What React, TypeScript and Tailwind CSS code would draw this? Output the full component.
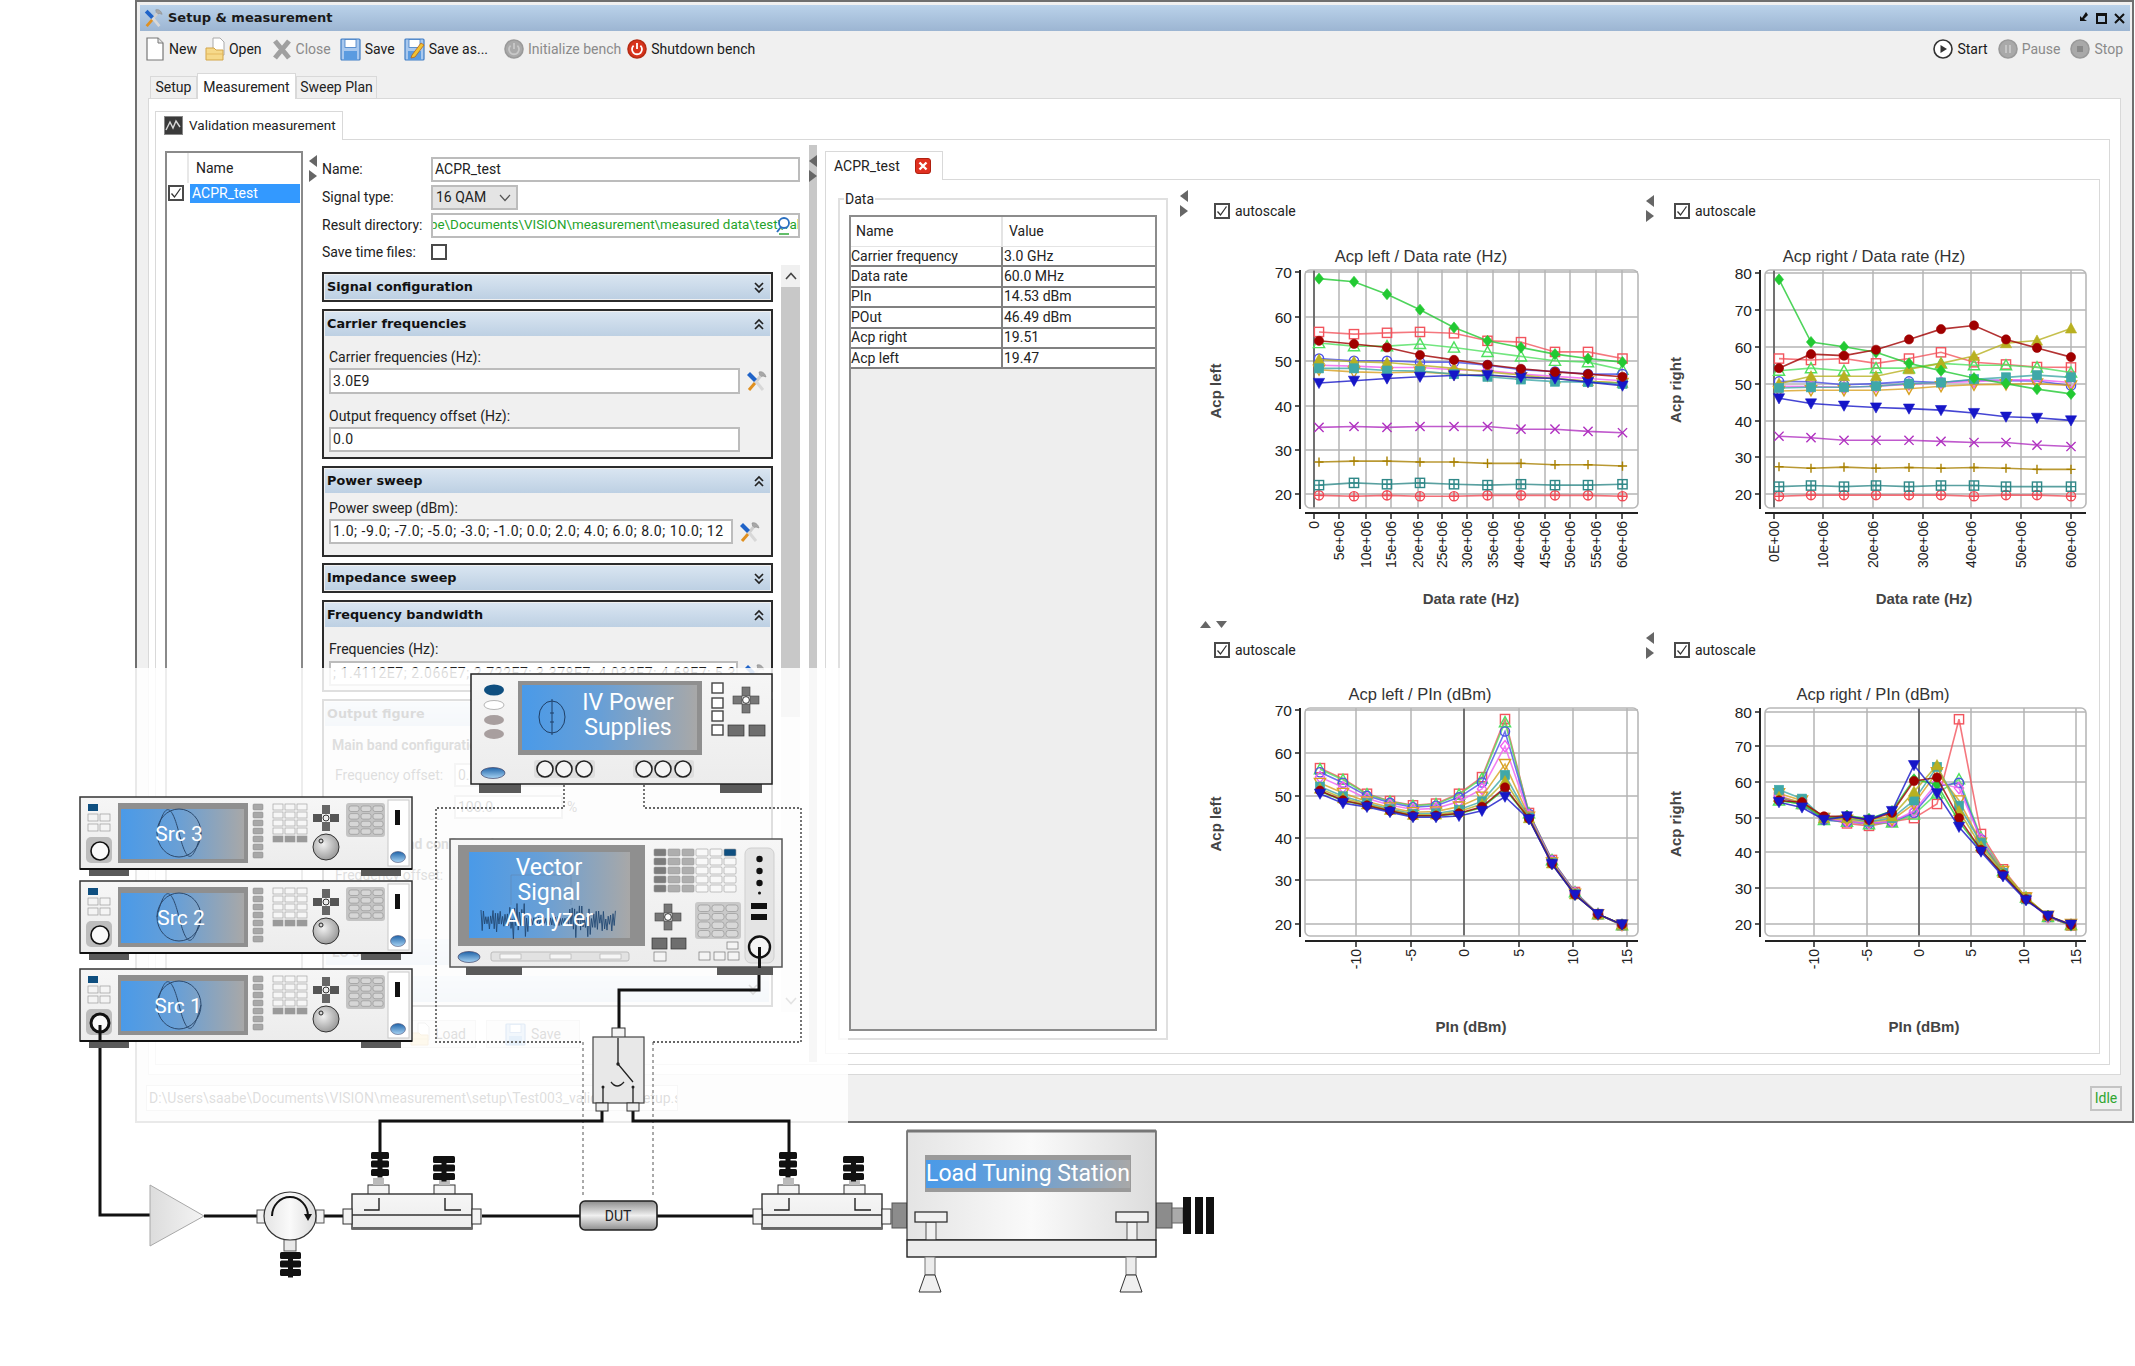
import React from "react";

const UI = "font-['Roboto','Liberation_Sans',sans-serif]";
const CH = "font-['Liberation_Sans',sans-serif]";

type Series = { c: string; m: string; v: number[] };

const C = {
  red: "#f2555e", lt: "#4fe05f", bo: "#4a50e8", mg: "#f060f0", or: "#d8a020", te: "#3fa8a8",
  ol: "#b8b020", gr: "#22c932", dr: "#a00000", bl: "#1616c8", xx: "#b030c0", pl: "#a88000", bx: "#308888", cp: "#f04a55",
};

const chart1: Series[] = [
  { c: C.cp, m: "cp", v: [19.7, 19.5, 19.7, 19.5, 19.5, 19.7, 19.7, 19.7, 19.7, 19.5] },
  { c: C.bx, m: "bx", v: [22, 22.5, 22.2, 22.5, 22.2, 22, 22.2, 22, 22, 22.2] },
  { c: C.pl, m: "pl", v: [27.2, 27.4, 27.4, 27.2, 27.2, 26.9, 26.9, 26.6, 26.6, 26.3] },
  { c: C.xx, m: "xx", v: [35, 35.2, 35, 35.2, 35.2, 35.2, 34.6, 34.6, 34.1, 33.8] },
  { c: C.red, m: "sq", v: [56.5, 56, 56.3, 56.5, 56.2, 54.5, 54.2, 52, 52, 50.5] },
  { c: C.lt, m: "tr", v: [54, 53.3, 53.3, 53.8, 53, 52, 51, 50, 49.7, 48] },
  { c: C.bo, m: "oc", v: [50.5, 50, 50, 49.7, 49.7, 49, 48, 47.6, 47, 47] },
  { c: C.mg, m: "od", v: [49, 48.8, 48.5, 48.5, 48, 47.8, 47, 46.5, 46, 45.5] },
  { c: C.or, m: "it", v: [48, 47.5, 47.3, 47.5, 47, 46.7, 46.3, 46, 45.4, 45] },
  { c: C.ol, m: "TR", v: [50.3, 49.8, 49.6, 49, 48.3, 47.5, 46.8, 46, 45.4, 45] },
  { c: C.te, m: "SQ", v: [48.3, 48.3, 47.8, 47.7, 47, 46.4, 45.8, 45.3, 45.2, 44.8] },
  { c: C.bl, m: "IT", v: [45, 45.5, 46, 46.4, 46.7, 46.8, 46.3, 46, 45.2, 44.4] },
  { c: C.gr, m: "DI", v: [68.5, 67.8, 65, 61.5, 57.5, 54.5, 53, 51.5, 50.5, 49.7] },
  { c: C.dr, m: "CI", v: [54.5, 53.8, 53, 51.3, 50.2, 49.1, 48.2, 47.5, 47, 46.4] },
];

const chart2: Series[] = [
  { c: C.cp, m: "cp", v: [19.4, 19.7, 19.7, 19.7, 19.7, 19.7, 19.4, 19.7, 19.7, 19.4] },
  { c: C.bx, m: "bx", v: [22, 22.3, 22, 22.3, 22, 22.3, 22.3, 22, 22, 22] },
  { c: C.pl, m: "pl", v: [27.4, 27, 27.3, 27, 27.2, 27, 27.2, 27, 26.7, 26.7] },
  { c: C.xx, m: "xx", v: [35.7, 35.3, 34.6, 34.6, 34.6, 34.3, 34, 34, 33.3, 32.9] },
  { c: C.red, m: "sq", v: [56.8, 56.4, 56.8, 55.5, 56.8, 58.5, 55.8, 55.2, 54.5, 54.4] },
  { c: C.lt, m: "tr", v: [53.5, 54.2, 53.5, 54.2, 54.2, 55.5, 55, 55, 54.4, 53] },
  { c: C.bo, m: "oc", v: [50.6, 50.5, 49.7, 50, 50.6, 50.3, 51, 50.8, 50.7, 49.5] },
  { c: C.mg, m: "od", v: [49.3, 49.2, 49, 49.3, 49.8, 50.3, 50.5, 51, 51, 50.3] },
  { c: C.or, m: "it", v: [48, 48.2, 48.2, 48.2, 48.6, 49.3, 49.7, 49.8, 50, 49.5] },
  { c: C.ol, m: "TR", v: [50, 52, 52, 52, 53.9, 55.5, 57.5, 61, 61.7, 65] },
  { c: C.te, m: "SQ", v: [48.8, 49, 49, 49.3, 50, 50.3, 51.2, 51.7, 52.3, 51.7] },
  { c: C.gr, m: "DI", v: [78.3, 61.3, 60, 58.5, 55.5, 53.5, 51.5, 50, 48.5, 47.2] },
  { c: C.dr, m: "CI", v: [54.2, 58, 57.6, 59.2, 62, 64.8, 65.8, 62, 59.7, 57.2] },
  { c: C.bl, m: "IT", v: [46, 44.6, 44, 43.5, 43.2, 42.8, 42, 41, 40.7, 40] },
];

const low = [50.5, 48.3, 47.4, 46.2, 45, 45, 45.3, 46.5, 49.8, 44.5, 34, 26.8, 22.3, 19.9];
const high = [56.5, 54, 50.5, 48.8, 47.8, 48.2, 50.5, 54.4, 68, 46, 35, 27.5, 22.3, 19.7];
const mix = (t: number) => low.map((l, i) => l + (high[i] - l) * t);
const chart3: Series[] = [
  { c: C.red, m: "sq", v: mix(1) },
  { c: C.lt, m: "tr", v: mix(0.96) },
  { c: C.bo, m: "oc", v: mix(0.84) },
  { c: C.mg, m: "od", v: mix(0.65) },
  { c: C.or, m: "it", v: mix(0.42) },
  { c: C.te, m: "SQ", v: mix(0.28) },
  { c: C.ol, m: "TR", v: mix(0.2) },
  { c: C.gr, m: "DI", v: mix(0.1) },
  { c: C.dr, m: "CI", v: mix(0.12) },
  { c: C.bl, m: "IT", v: mix(0) },
];

const chart4: Series[] = [
  { c: C.red, m: "sq", v: [56, 54, 50, 48.5, 47.8, 49, 50, 54, 78, 45.5, 35.5, 27.5, 22, 19.6] },
  { c: C.lt, m: "tr", v: [55, 54, 49.5, 49, 48.3, 48.8, 51, 57, 61, 44.5, 35, 27.5, 22, 19.7] },
  { c: C.bo, m: "oc", v: [56, 54, 49.5, 49, 48.5, 49, 51.5, 59, 60, 44, 34.5, 27.2, 22, 19.7] },
  { c: C.mg, m: "od", v: [56.5, 54, 50, 49, 48.5, 49, 52, 60, 58.5, 44, 34.5, 27.2, 22, 19.7] },
  { c: C.or, m: "it", v: [57, 55, 50, 49.5, 49, 49.5, 54, 63, 55, 43, 35, 27.5, 22.3, 20] },
  { c: C.te, m: "SQ", v: [58, 55.5, 50, 50, 49, 50, 55, 64.5, 53.5, 43, 34.5, 27, 22.3, 19.7] },
  { c: C.ol, m: "TR", v: [56, 54.5, 50, 50, 49.5, 50.5, 57.5, 65, 52, 42, 34.5, 27.5, 22.3, 19.6] },
  { c: C.gr, m: "DI", v: [55, 54, 50, 50.7, 49.8, 52, 61, 59.5, 49, 41, 34, 27, 22.3, 19.6] },
  { c: C.dr, m: "CI", v: [55, 54.5, 50.5, 50.5, 49.5, 51.5, 60.5, 61.5, 50, 41, 34, 27, 22.3, 19.8] },
  { c: C.bl, m: "IT", v: [54.5, 53, 49.5, 50.5, 49.5, 52, 65, 57, 47.5, 40.5, 33.5, 26.7, 22.3, 19.8] },
];

function Marker({ x, y, c, m }: { x: number; y: number; c: string; m: string }) {
  const r = 4.6;
  const o = { fill: "#ffffff00", stroke: c, strokeWidth: 1.4 };
  const f = { fill: c, stroke: c, strokeWidth: 0.6 };
  const tri = `${x},${y - r - 1} ${x - r - 1},${y + r} ${x + r + 1},${y + r}`;
  const inv = `${x},${y + r + 1} ${x - r - 1},${y - r} ${x + r + 1},${y - r}`;
  const dia = `${x},${y - r - 1} ${x - r},${y} ${x},${y + r + 1} ${x + r},${y}`;
  switch (m) {
    case "sq": return <rect x={x - r} y={y - r} width={r * 2} height={r * 2} {...o} />;
    case "SQ": return <rect x={x - r} y={y - r} width={r * 2} height={r * 2} {...f} />;
    case "tr": return <polygon points={tri} {...o} />;
    case "TR": return <polygon points={tri} {...f} />;
    case "it": return <polygon points={inv} {...o} />;
    case "IT": return <polygon points={inv} {...f} />;
    case "oc": return <circle cx={x} cy={y} r={r} {...o} />;
    case "CI": return <circle cx={x} cy={y} r={r} {...f} />;
    case "od": return <polygon points={dia} {...o} />;
    case "DI": return <polygon points={dia} {...f} />;
    case "xx": return <path d={`M${x - r} ${y - r}L${x + r} ${y + r}M${x - r} ${y + r}L${x + r} ${y - r}`} {...o} />;
    case "pl": return <path d={`M${x - r} ${y}H${x + r}M${x} ${y - r}V${y + r}`} {...o} />;
    case "bx": return (
      <g {...o}>
        <rect x={x - r} y={y - r} width={r * 2} height={r * 2} />
        <path d={`M${x - r} ${y}H${x + r}M${x} ${y - r}V${y + r}`} />
      </g>
    );
    default: return (
      <g {...o}>
        <circle cx={x} cy={y} r={r} />
        <path d={`M${x - r} ${y}H${x + r}M${x} ${y - r}V${y + r}`} />
      </g>
    );
  }
}

type ChartProps = {
  vb: number[];
  title: string; tx: number; ty: number;
  l: number; r: number; t: number; b: number; ax: number; bx: number;
  yTicks: [string, number][]; xTicks: [string, number][]; zero: number;
  xs: number[]; y20: number; k: number; series: Series[];
  yl: [string, number, number]; xl: [string, number, number];
};

function Chart(p: ChartProps) {
  return (
    <svg className={"block " + CH} width={p.vb[2]} height={p.vb[3]} viewBox={p.vb.join(" ")}>
      <text x={p.tx} y={p.ty + 6} fontSize="16.5" fill="#333" textAnchor="middle">{p.title}</text>
      {p.yTicks.map(([s, y]) => (
        <g key={s}>
          <line x1={p.l} x2={p.r} y1={y} y2={y} stroke="#b4b4b4" strokeWidth="1.5" />
          <line x1={p.ax - 5} x2={p.ax} y1={y} y2={y} stroke="#222" strokeWidth="1.5" />
          <text x={p.ax - 8} y={y + 5.5} fontSize="15.5" fill="#222" textAnchor="end">{s}</text>
        </g>
      ))}
      {p.xTicks.map(([s, x]) => (
        <g key={s}>
          <line x1={x} x2={x} y1={p.t} y2={p.b} stroke="#b4b4b4" strokeWidth="1.5" />
          <line x1={x} x2={x} y1={p.bx} y2={p.bx + 6} stroke="#222" strokeWidth="1.5" />
          <text transform={`translate(${x + 5},${p.bx + 8}) rotate(-90)`} fontSize="14" fill="#222" textAnchor="end">{s}</text>
        </g>
      ))}
      <line x1={p.zero} x2={p.zero} y1={p.t} y2={p.b} stroke="#555" strokeWidth="1.5" />
      <rect x={p.l} y={p.t} width={p.r - p.l} height={p.b - p.t} rx="5" fill="none" stroke="#b8b8b8" strokeWidth="1.6" />
      <line x1={p.ax} x2={p.ax} y1={p.t} y2={p.b + 1} stroke="#222" strokeWidth="2" />
      <line x1={p.l} x2={p.r} y1={p.bx} y2={p.bx} stroke="#222" strokeWidth="2" />
      {p.series.map((s, i) => (
        <g key={i}>
          <polyline
            points={s.v.map((v, j) => `${p.xs[j]},${p.y20 - (v - 20) * p.k}`).join(" ")}
            fill="none" stroke={s.c} strokeWidth="1.6" strokeOpacity="0.8"
          />
          {s.v.map((v, j) => <Marker key={j} x={p.xs[j]} y={p.y20 - (v - 20) * p.k} c={s.c} m={s.m} />)}
        </g>
      ))}
      <text transform={`translate(${p.yl[1] + 5},${p.yl[2]}) rotate(-90)`} fontSize="15" fontWeight="700" fill="#444" textAnchor="middle">{p.yl[0]}</text>
      <text x={p.xl[1]} y={p.xl[2] + 5} fontSize="15" fontWeight="700" fill="#444" textAnchor="middle">{p.xl[0]}</text>
    </svg>
  );
}

const x1s = [1319, 1354, 1387, 1420, 1454, 1487.5, 1521, 1555, 1588, 1622.5];
const x2s = [1779, 1811, 1844, 1876, 1909, 1941, 1974, 2006, 2037, 2071];
const x3s = [1320, 1343, 1367, 1390, 1413, 1436, 1459, 1482, 1505, 1529, 1552, 1575, 1598, 1622];
const x4s = [1779, 1802, 1824, 1847, 1869, 1892, 1914, 1937, 1959, 1981, 2003, 2026, 2048, 2071];

function Check({ on }: { on?: boolean }) {
  return (
    <span className="w-[16px] h-[16px] border-2 border-[#4a4a4a] bg-white flex items-center justify-center shrink-0">
      {on && (
        <svg width="12" height="12" viewBox="0 0 12 12">
          <path d="M1.5 6.5 L4.5 10 L10.5 1.5" fill="none" stroke="#333" strokeWidth="1.3" />
        </svg>
      )}
    </span>
  );
}

function Autoscale({ pl }: { pl: string }) {
  return (
    <div className={"h-[44px] flex items-center gap-[5px] text-[14px] text-[#222] " + pl}>
      <Check on />
      <span>autoscale</span>
    </div>
  );
}

function Tri({ d }: { d: "l" | "r" | "u" | "d" }) {
  const pts = { l: "9,0 9,12 1,6", r: "1,0 1,12 9,6", u: "0,9 5.5,2 11,9", d: "0,2 11,2 5.5,9" }[d];
  const wide = d === "u" || d === "d";
  return (
    <svg width={wide ? 11 : 10} height={wide ? 10 : 12} viewBox={wide ? "0 0 11 10" : "0 0 10 12"} className="block">
      <polygon points={pts} fill="#666" />
    </svg>
  );
}

function Hammer({ size = 22 }: { size?: number }) {
  return (
    <svg width={size} height={size} viewBox="0 0 22 22" className="block shrink-0">
      <path d="M14 2 C17 1 20 3 21 7 L18 6 L15 7 Z" fill="#a8a8a8" stroke="#888" strokeWidth="0.6" />
      <path d="M15.5 6 L10 13" stroke="#cfcfcf" strokeWidth="3" />
      <path d="M10 13 L4 20" stroke="#e09020" strokeWidth="3" />
      <path d="M9 9 L18 20" stroke="#d8d8d8" strokeWidth="3" />
      <path d="M2 5 L5 2 L12 9 L9 12 Z" fill="#1f63c8" />
    </svg>
  );
}

function Chev({ up }: { up?: boolean }) {
  const a = up ? "M2 6 L6 2 L10 6 M2 11 L6 7 L10 11" : "M2 2 L6 6 L10 2 M2 7 L6 11 L10 7";
  return (
    <svg width="12" height="13" viewBox="0 0 12 13" className="block shrink-0">
      <path d={a} fill="none" stroke="#222" strokeWidth="1.7" />
    </svg>
  );
}

function Section({ title, up, children }: { title: string; up?: boolean; children?: React.ReactNode }) {
  return (
    <div className="border-2 border-[#2b2b2b] p-[1px] bg-[#f0f0f0]">
      <div className="h-[24px] flex items-center justify-between pl-[2px] pr-[5px] bg-gradient-to-b from-[#d9e5f1] to-[#bdd0e3]">
        <span className="text-[12.8px] font-bold text-[#111] font-['DejaVu_Sans',sans-serif]">{title}</span>
        <Chev up={up} />
      </div>
      {children}
    </div>
  );
}

function Field({ cls, children }: { cls: string; children?: React.ReactNode }) {
  return (
    <div className={"border-2 border-[#bcbcbc] bg-white text-[14px] text-[#222] flex items-center overflow-hidden whitespace-nowrap pl-[2px] " + cls}>
      {children}
    </div>
  );
}

function Doc() {
  return (
    <svg width="20" height="24" viewBox="0 0 20 24" className="block">
      <path d="M2 1 H13 L18 6 V23 H2 Z" fill="#fff" stroke="#777" strokeWidth="1.2" />
      <path d="M13 1 V6 H18" fill="#e4e4e4" stroke="#777" strokeWidth="1" />
    </svg>
  );
}
function OpenI() {
  return (
    <svg width="20" height="24" viewBox="0 0 20 24" className="block">
      <path d="M8 1 H15 L19 5 V18 H8 Z" fill="#fff" stroke="#aaa" strokeWidth="1" />
      <path d="M1 11 H9 L11 13 H18 V23 H1 Z" fill="#f6d98a" stroke="#d3a548" strokeWidth="1" />
      <path d="M1 17 H18" stroke="#e5b95e" strokeWidth="1" />
    </svg>
  );
}
function CloseI() {
  return (
    <svg width="20" height="24" viewBox="0 0 20 24" className="block">
      <path d="M3 4 L17 21 M17 4 L3 21" stroke="#a0a0a0" strokeWidth="5" />
    </svg>
  );
}
function Floppy({ pen }: { pen?: boolean }) {
  return (
    <svg width="21" height="24" viewBox="0 0 21 24" className="block">
      <rect x="1" y="2" width="19" height="21" rx="1" fill="#a8c8ee" stroke="#3f7cc4" strokeWidth="1.2" />
      <rect x="5" y="2.5" width="11" height="8" fill="#fff" stroke="#3f7cc4" strokeWidth="0.8" />
      <rect x="4" y="14" width="13" height="9" fill="#5a9be0" />
      {pen && <path d="M8 18 L17 6 L20 8 L11 20 L7 21 Z" fill="#f1c232" stroke="#b5651d" strokeWidth="0.8" />}
    </svg>
  );
}
function Round({ kind }: { kind: "init" | "down" | "start" | "pause" | "stop" }) {
  const red = kind === "down";
  const white = kind === "start";
  return (
    <svg width="20" height="24" viewBox="0 0 20 24" className="block">
      <circle cx="10" cy="12" r="9" fill={red ? "#d8331c" : white ? "#fff" : "#a9a9a9"} stroke={red ? "#b52c14" : white ? "#333" : "#9a9a9a"} strokeWidth="1.6" />
      {(kind === "init" || kind === "down") && (
        <path d="M6.6 8.6 A5 5 0 1 0 13.4 8.6 M10 6 V12" fill="none" stroke={red ? "#fff" : "#c8c8c8"} strokeWidth="1.8" />
      )}
      {kind === "start" && <polygon points="7.5,8 14,12 7.5,16" fill="#333" />}
      {kind === "pause" && <path d="M8 8 V16 M12 8 V16" stroke="#c8c8c8" strokeWidth="1.8" />}
      {kind === "stop" && <rect x="7" y="9" width="6" height="6" fill="#8a8a8a" />}
    </svg>
  );
}

function Tool({ icon, label, dim, cls }: { icon: React.ReactNode; label: string; dim?: boolean; cls?: string }) {
  return (
    <div className={"flex items-center gap-[4px] " + (cls || "")}>
      {icon}
      <span className={"text-[14px] " + (dim ? "text-[#8a8a8a]" : "text-[#1a1a1a]")}>{label}</span>
    </div>
  );
}

function Rows() {
  const rows = [
    ["Carrier frequency", "3.0 GHz"], ["Data rate", "60.0 MHz"], ["PIn", "14.53 dBm"],
    ["POut", "46.49 dBm"], ["Acp right", "19.51"], ["Acp left", "19.47"],
  ];
  return (
    <div className="ml-[9px] mt-[15px] w-[308px] h-[816px] border-2 border-[#8c8c8c] bg-[#eeeeee] text-[14px] text-[#222]">
      <div className="h-[30px] flex bg-white border-b border-[#e4e4e4]">
        <div className="w-[152px] pl-[5px] border-r-2 border-[#e4e4e4] flex items-center">Name</div>
        <div className="pl-[6px] flex items-center">Value</div>
      </div>
      {rows.map(([a, b]) => (
        <div key={a} className="h-[20.4px] flex bg-white border-b-2 border-[#808080]">
          <div className="w-[152px] border-r-2 border-[#808080] flex items-center">{a}</div>
          <div className="pl-[1px] flex items-center">{b}</div>
        </div>
      ))}
    </div>
  );
}

/* ---------- bench drawing ---------- */
function Src({ y, label, lx, ring }: { y: number; label: string; lx: number; ring?: boolean }) {
  const gray = "#a8a8a8";
  return (
    <g>
      <rect x="89" y={y + 72} width="40" height="7" fill="#5a5a5a" />
      <rect x="361" y={y + 72} width="40" height="7" fill="#5a5a5a" />
      <rect x="80" y={y} width="332" height="72" fill="url(#body)" stroke="#333" strokeWidth="1.5" />
      <line x1="80" x2="412" y1={y + 72} y2={y + 72} stroke="#111" strokeWidth="2" />
      <rect x="118" y={y + 6} width="130" height="60" fill="#8f8f8f" />
      <rect x="121" y={y + 12} width="123" height="50" fill="url(#screen)" />
      <ellipse cx="179" cy={y + 36} rx="22" ry="24" fill="none" stroke="#2c4a6e" strokeWidth="1" />
      <path d={`M157 ${y + 36} C165 ${y + 2}, 172 ${y + 8}, 179 ${y + 36} S192 ${y + 70}, 201 ${y + 36}`} fill="none" stroke="#2c4a6e" strokeWidth="1" />
      <text x={lx} y={y + 44} fontSize="21" fill="#fff" textAnchor="middle" className={UI}>{label}</text>
      <rect x="88" y={y + 7} width="10" height="7" fill="#0f4f80" />
      {[0, 1].map((r) => [0, 1].map((c) => (
        <rect key={`${r}${c}`} x={88 + c * 12} y={y + 17 + r * 10} width="10" height="7" fill="#f4f4f4" stroke="#9a9a9a" strokeWidth="0.7" />
      )))}
      <rect x="86" y={y + 40} width="26" height="26" rx="5" fill="#bdbdbd" />
      <circle cx="100" cy={y + 54} r="9" fill="#fafafa" stroke="#111" strokeWidth={ring ? 3 : 1.6} />
      {[0, 1, 2, 3, 4, 5, 6].map((i) => (
        <rect key={i} x="253" y={y + 7 + i * 8} width="10" height="6" rx="1" fill={gray} stroke="#8a8a8a" strokeWidth="0.5" />
      ))}
      {[0, 1, 2, 3, 4].map((r) => [0, 1, 2].map((c) => (
        <rect key={`${r}-${c}`} x={273 + c * 12} y={y + 7 + r * 8} width="10" height="6" fill={r === 4 ? "#9a9a9a" : "#f6f6f6"} stroke="#9a9a9a" strokeWidth="0.6" />
      )))}
      <rect x="322" y={y + 8} width="8" height="9" fill="#666" />
      <rect x="322" y={y + 25} width="8" height="9" fill="#666" />
      <rect x="313" y={y + 17} width="9" height="8" fill="#555" />
      <rect x="330" y={y + 17} width="9" height="8" fill="#555" />
      <circle cx="326" cy={y + 21} r="3" fill="#eee" stroke="#333" />
      <circle cx="326" cy={y + 50} r="13" fill="url(#knob)" stroke="#333" strokeWidth="1" />
      <circle cx="321" cy={y + 44} r="2" fill="none" stroke="#222" />
      <rect x="346" y={y + 6} width="39" height="34" rx="3" fill="#c4c4c4" />
      {[0, 1, 2, 3].map((r) => [0, 1, 2].map((c) => (
        <rect key={`k${r}${c}`} x={349 + c * 12} y={y + 9 + r * 7.6} width="10" height="5.5" rx="2" fill="#d6d6d6" stroke="#8e8e8e" strokeWidth="0.6" />
      )))}
      <rect x="388" y={y + 3} width="21" height="66" fill="#fff" stroke="#c8c8c8" />
      <rect x="395" y={y + 13} width="5" height="15" fill="#111" />
      <ellipse cx="398" cy={y + 60} rx="7.5" ry="5.5" fill="url(#pill)" stroke="#557" strokeWidth="0.6" />
    </g>
  );
}

function Dpad({ x, y }: { x: number; y: number }) {
  return (
    <g>
      <rect x={x - 4} y={y - 13} width="8" height="9" fill="#777" stroke="#444" strokeWidth="0.6" />
      <rect x={x - 4} y={y + 4} width="8" height="9" fill="#777" stroke="#444" strokeWidth="0.6" />
      <rect x={x - 13} y={y - 4} width="9" height="8" fill="#777" stroke="#444" strokeWidth="0.6" />
      <rect x={x + 4} y={y - 4} width="9" height="8" fill="#777" stroke="#444" strokeWidth="0.6" />
      <circle cx={x} cy={y} r="3.4" fill="#fff" stroke="#333" />
    </g>
  );
}

function Stack({ x, w, t, n }: { x: number; w: number; t: number; n: number }) {
  return (
    <g>
      {Array.from({ length: n }).map((_, i) => (
        <rect key={i} x={x} y={t + i * 8.5} width={w} height={7} rx="1.5" fill="#111" />
      ))}
      <rect x={x + w / 2 - 2.5} y={t} width="5" height={n * 8.5} fill="#111" />
    </g>
  );
}

function Coupler({ x }: { x: number }) {
  return (
    <g>
      <rect x={x + 16} y="1185" width="21" height="10" fill="#f4f4f4" stroke="#333" />
      <rect x={x + 82} y="1185" width="21" height="10" fill="#f4f4f4" stroke="#333" />
      <rect x={x + 21} y="1178" width="11" height="7" fill="#bbb" />
      <rect x={x + 87} y="1178" width="11" height="7" fill="#bbb" />
      <rect x={x} y="1194" width="120" height="35" fill="url(#body)" stroke="#333" strokeWidth="1.4" />
      <line x1={x} x2={x + 120} y1="1215" y2="1215" stroke="#333" strokeWidth="1.5" />
      <line x1={x} x2={x + 120} y1="1228" y2="1228" stroke="#666" strokeWidth="2" />
      <path d={`M${x + 27} 1198 V1210 H${x + 12}`} fill="none" stroke="#222" strokeWidth="1.4" />
      <path d={`M${x + 93} 1198 V1210 H${x + 109}`} fill="none" stroke="#222" strokeWidth="1.4" />
      <rect x={x - 9} y="1209" width="9" height="15" fill="#f4f4f4" stroke="#333" />
      <rect x={x + 120} y="1209" width="9" height="15" fill="#f4f4f4" stroke="#333" />
    </g>
  );
}

function noise() {
  let d = "";
  for (let i = 0; i <= 112; i++) {
    const x = 481 + i * 1.2;
    const c = Math.abs(x - 549);
    const env = c < 20 ? 3 : c < 42 ? 16 : 9;
    const a = Math.sin(i * 12.9898) * 43758.5453;
    const n = (a - Math.floor(a)) * 2 - 1;
    d += `${i ? "L" : "M"}${x.toFixed(1)} ${(921 + (i % 2 ? 1 : -1) * (2 + Math.abs(n) * env)).toFixed(1)}`;
  }
  return d;
}

function Bench() {
  return (
    <svg className={"absolute left-0 top-0 " + UI} width="2135" height="1366" viewBox="0 0 2135 1366">
      <defs>
        <linearGradient id="screen" x1="0" x2="1" y1="0" y2="0">
          <stop offset="0" stopColor="#4a9ae8" />
          <stop offset="0.45" stopColor="#689fd6" />
          <stop offset="1" stopColor="#a8a8a8" />
        </linearGradient>
        <linearGradient id="body" x1="0" x2="0" y1="0" y2="1">
          <stop offset="0" stopColor="#f6f6f6" />
          <stop offset="1" stopColor="#ececec" />
        </linearGradient>
        <linearGradient id="tuner" x1="0" x2="1" y1="0" y2="0">
          <stop offset="0" stopColor="#e4e4e4" />
          <stop offset="0.5" stopColor="#fafafa" />
          <stop offset="1" stopColor="#dcdcdc" />
        </linearGradient>
        <linearGradient id="amp" x1="0" x2="1" y1="0" y2="0">
          <stop offset="0" stopColor="#dcdcdc" />
          <stop offset="1" stopColor="#f4f4f4" />
        </linearGradient>
        <linearGradient id="dut" x1="0" x2="0" y1="0" y2="1">
          <stop offset="0" stopColor="#8d8d8d" />
          <stop offset="0.5" stopColor="#f0f0f0" />
          <stop offset="1" stopColor="#8d8d8d" />
        </linearGradient>
        <radialGradient id="knob" cx="0.4" cy="0.4" r="0.7">
          <stop offset="0" stopColor="#f0f0f0" />
          <stop offset="1" stopColor="#8f8f8f" />
        </radialGradient>
        <linearGradient id="pill" x1="0" x2="0" y1="0" y2="1">
          <stop offset="0" stopColor="#1f63a8" />
          <stop offset="1" stopColor="#a8d4f4" />
        </linearGradient>
      </defs>

      {/* dashed bias lines */}
      <path d="M564 777 V808 H436 V1042 H583 M644 777 V808 H801 V1042 H653" fill="none" stroke="#666" strokeWidth="1.8" strokeDasharray="2 2" />
      <path d="M583 1042 V1198 M653 1042 V1198" fill="none" stroke="#555" strokeWidth="1" strokeDasharray="3 3" />

      {/* solid wires */}
      <path d="M759 947 V990 H619 V1030" fill="none" stroke="#111" strokeWidth="3" />
      <path d="M602 1106 V1121 H380 V1154" fill="none" stroke="#111" strokeWidth="3" />
      <path d="M633 1106 V1121 H789 V1154" fill="none" stroke="#111" strokeWidth="3" />
      <path d="M100 1025 V1215 H152" fill="none" stroke="#111" strokeWidth="3" />
      <path d="M204 1216 H258 M324 1216 H344 M482 1216 H580 M657 1216 H753" fill="none" stroke="#111" strokeWidth="3" />

      <Src y={797} label="Src 3" lx={179} />
      <Src y={881} label="Src 2" lx={181} />
      <Src y={969} label="Src 1" lx={178} ring />
      <path d="M100 1025 V1040" stroke="#111" strokeWidth="3" />

      {/* IV supplies */}
      <rect x="479" y="784" width="42" height="9" fill="#5a5a5a" />
      <rect x="720" y="784" width="42" height="9" fill="#5a5a5a" />
      <rect x="471" y="674" width="301" height="110" fill="url(#body)" stroke="#222" strokeWidth="1.5" />
      <rect x="518" y="681" width="184" height="74" fill="#8f8f8f" />
      <rect x="522" y="685" width="175" height="65" fill="url(#screen)" />
      <ellipse cx="552" cy="717" rx="13" ry="16" fill="none" stroke="#1f3f66" strokeWidth="1" />
      <path d="M552 699 V735 M550 713 H554 M550 722 H554" fill="none" stroke="#1f3f66" strokeWidth="1" />
      <text x="628" y="710" fontSize="23" fill="#fff" textAnchor="middle">IV Power</text>
      <text x="628" y="735" fontSize="23" fill="#fff" textAnchor="middle">Supplies</text>
      <ellipse cx="494" cy="690" rx="10" ry="5.5" fill="#0f4f80" />
      <ellipse cx="494" cy="705" rx="10" ry="4.5" fill="#fff" stroke="#999" strokeWidth="0.7" />
      <ellipse cx="494" cy="720" rx="10" ry="5" fill="#a89f9f" />
      <ellipse cx="494" cy="734" rx="10" ry="5" fill="#a89f9f" />
      <ellipse cx="493" cy="773" rx="12" ry="5.5" fill="url(#pill)" stroke="#446" strokeWidth="0.7" />
      <rect x="534" y="760" width="61" height="18" rx="3" fill="#dedede" />
      <rect x="633" y="760" width="61" height="18" rx="3" fill="#dedede" />
      {[545, 564, 584, 644, 663, 683].map((x) => (
        <circle key={x} cx={x} cy="769" r="8" fill="#f4f4f4" stroke="#222" strokeWidth="1.6" />
      ))}
      {[688, 703, 716, 730].map((y) => (
        <rect key={y} x="712" y={y - 5} width="11" height="10" fill="#fff" stroke="#444" strokeWidth="1.4" />
      ))}
      <Dpad x={746} y={700} />
      <rect x="728" y="725" width="16" height="11" fill="#6e6e6e" stroke="#333" strokeWidth="0.7" />
      <rect x="749" y="725" width="16" height="11" fill="#6e6e6e" stroke="#333" strokeWidth="0.7" />

      {/* VSA */}
      <rect x="466" y="967" width="56" height="8" fill="#5a5a5a" />
      <rect x="717" y="967" width="56" height="8" fill="#5a5a5a" />
      <rect x="450" y="839" width="332" height="128" fill="url(#body)" stroke="#555" strokeWidth="1.5" />
      <rect x="458" y="845" width="187" height="101" fill="#8f8f8f" />
      <rect x="469" y="852" width="161" height="86" fill="url(#screen)" />
      <path d="M511 905 V875 H571 V905" fill="none" stroke="#5f86ad" strokeWidth="1" opacity="0.5" />
      <path d={noise()} fill="none" stroke="#244a74" strokeWidth="0.9" />
      <text x="549" y="875" fontSize="23" fill="#fff" textAnchor="middle">Vector</text>
      <text x="549" y="900" fontSize="23" fill="#fff" textAnchor="middle">Signal</text>
      <text x="549" y="926" fontSize="23" fill="#fff" textAnchor="middle">Analyzer</text>
      {[0, 1, 2, 3, 4].map((r) => [0, 1, 2, 3, 4, 5].map((c) => (
        <rect key={`v${r}${c}`} x={654 + c * 14} y={849 + r * 9} width="12" height="7" rx="1"
          fill={r === 0 && c === 5 ? "#0f4f80" : c === 0 ? "#7c7c7c" : c < 3 ? "#aeaeae" : "#f8f8f8"} stroke="#9a9a9a" strokeWidth="0.6" />
      )))}
      <rect x="745" y="848" width="29" height="115" rx="6" fill="#e4e4e4" stroke="#cfcfcf" />
      {[859, 871, 883].map((y) => <circle key={y} cx="759.5" cy={y} r="3.2" fill="#111" />)}
      <circle cx="759.5" cy="893" r="1.5" fill="#111" />
      <rect x="751" y="903" width="16" height="6" fill="#111" />
      <rect x="751" y="914" width="16" height="6" fill="#111" />
      <circle cx="759.5" cy="947" r="10.5" fill="#f4f4f4" stroke="#111" strokeWidth="2.4" />
      <path d="M759.5 947 V968" stroke="#111" strokeWidth="3" />
      <Dpad x={668} y={917} />
      <rect x="695" y="902" width="46" height="37" rx="3" fill="#c9c9c9" />
      {[0, 1, 2, 3].map((r) => [0, 1, 2].map((c) => (
        <rect key={`p${r}${c}`} x={698 + c * 14} y={905 + r * 8.5} width="12" height="6.5" rx="2.5" fill="#d8d8d8" stroke="#8e8e8e" strokeWidth="0.6" />
      )))}
      <rect x="652" y="938" width="15" height="11" fill="#6e6e6e" stroke="#333" strokeWidth="0.7" />
      <rect x="671" y="938" width="15" height="11" fill="#6e6e6e" stroke="#333" strokeWidth="0.7" />
      <rect x="654" y="952" width="12" height="9" fill="#f4f4f4" stroke="#777" strokeWidth="0.7" />
      {[699, 714, 728].map((x) => <rect key={x} x={x} y="952" width="11" height="8" fill="#f4f4f4" stroke="#777" strokeWidth="0.7" />)}
      <rect x="727" y="942" width="11" height="7" fill="#f4f4f4" stroke="#777" strokeWidth="0.7" />
      <ellipse cx="469" cy="957" rx="11" ry="5.5" fill="url(#pill)" stroke="#446" strokeWidth="0.7" />
      <rect x="491" y="952" width="138" height="9" rx="2" fill="#e2e2e2" stroke="#bbb" />
      {[500, 550, 600].map((x) => <rect key={x} x={x} y="954" width="21" height="5" fill="#f6f6f6" stroke="#aaa" strokeWidth="0.6" />)}

      {/* switch */}
      <rect x="612" y="1028" width="13" height="10" fill="#f4f4f4" stroke="#333" />
      <rect x="593" y="1037" width="51" height="66" fill="#e8e8e8" stroke="#444" strokeWidth="1.2" />
      <path d="M618 1038 V1064 L633 1082 M603 1087 V1103 M633 1087 V1103 M611 1082 Q617 1090 624 1082" fill="none" stroke="#222" strokeWidth="1.3" />
      <circle cx="618" cy="1064" r="1.7" fill="#222" />
      <circle cx="603" cy="1087" r="1.5" fill="#222" />
      <circle cx="633" cy="1087" r="1.5" fill="#222" />
      <rect x="596" y="1103" width="12" height="8" fill="#f0f0f0" stroke="#333" />
      <rect x="627" y="1103" width="12" height="8" fill="#f0f0f0" stroke="#333" />

      {/* amp + circulator */}
      <polygon points="150,1185 150,1246 204,1216" fill="url(#amp)" stroke="#a8a8a8" strokeWidth="1" />
      <rect x="257" y="1210" width="8" height="13" fill="#f2f2f2" stroke="#555" />
      <rect x="316" y="1210" width="8" height="13" fill="#f2f2f2" stroke="#555" />
      <rect x="284" y="1239" width="12" height="12" fill="#e8e8e8" stroke="#555" />
      <ellipse cx="290" cy="1216" rx="26" ry="24" fill="url(#tuner)" stroke="#333" strokeWidth="1.2" />
      <path d="M272 1216 A18 19 0 0 1 308 1216" fill="none" stroke="#111" strokeWidth="2" />
      <polygon points="304,1214 312,1214 308,1221" fill="#111" />
      <Stack x={280} w={21} t={1252} n={3} />

      <Coupler x={352} />
      <Stack x={371} w={18} t={1152} n={3} />
      <Stack x={433} w={22} t={1156} n={3} />

      <rect x="580" y="1201" width="77" height="29" rx="5" fill="url(#dut)" stroke="#222" strokeWidth="1.6" />
      <text x="618" y="1221" fontSize="14" fill="#222" textAnchor="middle">DUT</text>

      <Coupler x={762} />
      <Stack x={779} w={18} t={1152} n={3} />
      <Stack x={843} w={21} t={1156} n={3} />

      {/* tuner */}
      <rect x="892" y="1203" width="15" height="25" fill="#8c8c8c" stroke="#555" />
      <rect x="1156" y="1203" width="16" height="25" fill="#8c8c8c" stroke="#555" />
      <rect x="1172" y="1208" width="11" height="15" fill="#aaa" stroke="#666" />
      {[1183, 1195, 1206].map((x) => <rect key={x} x={x} y="1197" width="8" height="37" fill="#111" />)}
      <rect x="907" y="1131" width="249" height="109" fill="url(#tuner)" stroke="#333" strokeWidth="1.2" />
      <line x1="907" x2="1156" y1="1131" y2="1131" stroke="#777" strokeWidth="3" />
      <rect x="925" y="1155" width="206" height="37" fill="#9a9a9a" />
      <rect x="926" y="1160" width="204" height="28" fill="url(#screen)" />
      <text x="1028" y="1181" fontSize="23" fill="#fff" textAnchor="middle">Load Tuning Station</text>
      <rect x="926" y="1222" width="10" height="19" fill="#f0f0f0" stroke="#555" />
      <rect x="1127" y="1222" width="10" height="19" fill="#f0f0f0" stroke="#555" />
      <rect x="915" y="1212" width="32" height="10" fill="#f0f0f0" stroke="#333" strokeWidth="1.3" />
      <rect x="1116" y="1212" width="32" height="10" fill="#f0f0f0" stroke="#333" strokeWidth="1.3" />
      <rect x="907" y="1240" width="249" height="17" fill="#ececec" stroke="#222" strokeWidth="1.4" />
      {[930, 1131].map((x) => (
        <g key={x}>
          <rect x={x - 5} y="1257" width="10" height="18" fill="#ececec" stroke="#777" />
          <polygon points={`${x - 5},1275 ${x + 5},1275 ${x + 11},1292 ${x - 11},1292`} fill="#f0f0f0" stroke="#333" />
        </g>
      ))}
    </svg>
  );
}

export default function App() {
  const tickA: [string, number][] = [["0", 1314], ["5e+06", 1339], ["10e+06", 1366], ["15e+06", 1391], ["20e+06", 1418], ["25e+06", 1442], ["30e+06", 1467], ["35e+06", 1493], ["40e+06", 1519], ["45e+06", 1545], ["50e+06", 1570], ["55e+06", 1596], ["60e+06", 1622]];
  const tickB: [string, number][] = [["0E+00", 1774], ["10e+06", 1823], ["20e+06", 1873], ["30e+06", 1923], ["40e+06", 1971], ["50e+06", 2021], ["60e+06", 2071]];
  return (
    <div className={"relative w-[2135px] h-[1366px] bg-white overflow-hidden " + UI}>
      {/* window */}
      <div className="ml-[135px] w-[1999px] h-[1123px] border-2 border-[#6f6f6f] bg-[#f0f0f0] flex flex-col">
        {/* title */}
        <div className="mt-[3px] ml-[3px] mr-[2px] h-[26px] shrink-0 flex items-center bg-gradient-to-b from-[#bad2ea] to-[#9cb5d2] pl-[3px] pr-[5px]">
          <Hammer size={20} />
          <span className="ml-[5px] text-[13px] font-bold text-[#1a1a1a] font-['DejaVu_Sans',sans-serif]">Setup &amp; measurement</span>
          <div className="ml-auto flex items-center gap-[7px]">
            <svg width="10" height="14" viewBox="0 0 10 14" className="block"><path d="M7 1 L9 4 L5 8 L8 10 H1 V5 L3 7 Z" fill="#111" /></svg>
            <span className="w-[11px] h-[11px] border-2 border-t-[3px] border-[#111]" />
            <svg width="11" height="11" viewBox="0 0 11 11" className="block"><path d="M1 1 L10 10 M10 1 L1 10" stroke="#111" strokeWidth="2" /></svg>
          </div>
        </div>
        {/* toolbar */}
        <div className="h-[36px] shrink-0 flex items-center pl-[8px] pr-[9px]">
          <Tool icon={<Doc />} label="New" />
          <Tool cls="ml-[8px]" icon={<OpenI />} label="Open" />
          <Tool cls="ml-[10px]" dim icon={<CloseI />} label="Close" />
          <Tool cls="ml-[9px]" icon={<Floppy />} label="Save" />
          <Tool cls="ml-[9px]" icon={<Floppy pen />} label="Save as..." />
          <Tool cls="ml-[16px]" dim icon={<Round kind="init" />} label="Initialize bench" />
          <Tool cls="ml-[6px]" icon={<Round kind="down" />} label="Shutdown bench" />
          <div className="ml-auto flex items-center gap-[10px]">
            <Tool icon={<Round kind="start" />} label="Start" />
            <Tool dim icon={<Round kind="pause" />} label="Pause" />
            <Tool dim icon={<Round kind="stop" />} label="Stop" />
          </div>
        </div>
        {/* main tabs */}
        <div className="h-[31px] shrink-0 flex items-end pl-[13px] text-[14px] text-[#222]">
          <div className="w-[47px] h-[22px] border border-b-0 border-[#d9d9d9] flex items-center justify-center">Setup</div>
          <div className="w-[99px] h-[26px] -mb-px z-10 bg-white border border-b-0 border-[#d9d9d9] flex items-start pt-[3px] justify-center">Measurement</div>
          <div className="w-[81px] h-[22px] border border-b-0 border-[#d9d9d9] flex items-center justify-center">Sweep Plan</div>
        </div>
        {/* outer tab panel */}
        <div className="ml-[11px] w-[1973px] h-[977px] shrink-0 bg-white border border-[#d9d9d9] pl-[6px] pt-[12px]">
          <div className="w-[188px] h-[29px] -mb-px pb-[2px] relative z-10 bg-white border border-b-0 border-[#d9d9d9] flex items-center pl-[8px] gap-[6px] text-[13.5px] text-[#222]">
            <svg width="19" height="19" viewBox="0 0 19 19" className="block">
              <rect x="0.5" y="0.5" width="18" height="18" fill="#3a3a3a" stroke="#888" />
              <path d="M2 14 L6 6 L9 12 L12 5 L16 11" fill="none" stroke="#d8d8d8" strokeWidth="1.4" />
            </svg>
            Validation measurement
          </div>
          {/* inner panel */}
          <div className="w-[1955px] h-[926px] border border-[#d9d9d9] flex pl-[9px] pt-[11px] text-[14px] text-[#222]">
            {/* list */}
            <div className="w-[138px] h-[884px] border-2 border-[#8a8a8a] shrink-0">
              <div className="h-[30px] flex items-center">
                <div className="w-[22px] h-full border-r-2 border-[#e8e8e8]" />
                <span className="ml-[7px]">Name</span>
              </div>
              <div className="flex items-center h-[20px]">
                <div className="w-[22px] pl-[1px]"><Check on /></div>
                <div className="ml-[1px] w-[110px] h-[19px] bg-[#3399ff] text-white pl-[2px] flex items-center">ACPR_test</div>
              </div>
            </div>
            {/* splitter arrows */}
            <div className="w-[19px] shrink-0 flex flex-col items-center pt-[4px] gap-[3px]">
              <Tri d="l" /><Tri d="r" />
            </div>
            {/* form */}
            <div className="w-[478px] shrink-0 pt-[6px]">
              <div className="flex items-center h-[25px]">
                <span className="w-[109px]">Name:</span>
                <Field cls="w-[369px] h-[25px]">ACPR_test</Field>
              </div>
              <div className="flex items-center h-[25px] mt-[3px]">
                <span className="w-[109px]">Signal type:</span>
                <div className="w-[87px] h-[25px] border-2 border-[#bcbcbc] bg-[#e4e4e4] flex items-center justify-between pl-[3px] pr-[5px]">
                  16 QAM
                  <svg width="12" height="8" viewBox="0 0 12 8"><path d="M1 1 L6 6.5 L11 1" fill="none" stroke="#555" strokeWidth="1.2" /></svg>
                </div>
              </div>
              <div className="flex items-center h-[25px] mt-[3px]">
                <span className="w-[109px]">Result directory:</span>
                <Field cls="relative w-[369px] h-[25px]">
                  <span className="-ml-[5px] text-[13.4px] text-[#1fa32a]">be\Documents\VISION\measurement\measured data\test\validation</span>
                  <svg width="20" height="21" viewBox="0 0 20 21" className="absolute right-[4px] top-0">
                    <circle cx="10" cy="8" r="5" fill="#fff" stroke="#2a6fc0" strokeWidth="1.8" />
                    <path d="M7 12 L3 17" stroke="#2a6fc0" strokeWidth="2" />
                    <path d="M5 19 H15" stroke="#1fa32a" strokeWidth="1.4" />
                  </svg>
                </Field>
              </div>
              <div className="flex items-center h-[16px] mt-[6px]">
                <span className="w-[109px]">Save time files:</span>
                <Check />
              </div>
              <div className="flex mt-[5px] h-[747px]">
                <div className="w-[451px] pt-[7px] flex flex-col overflow-hidden">
                  <Section title="Signal configuration" />
                  <div className="h-[7px] shrink-0" />
                  <Section title="Carrier frequencies" up>
                    <div className="pl-[4px] pt-[12px] pb-[4px] text-[14px]">
                      <div className="h-[18px] leading-[18px]">Carrier frequencies (Hz):</div>
                      <div className="flex items-center mt-[2px] h-[26px]">
                        <Field cls="w-[411px] h-[26px] tracking-[0.3px]">3.0E9</Field>
                        <span className="ml-[5px]"><Hammer /></span>
                      </div>
                      <div className="h-[18px] leading-[18px] mt-[13px]">Output frequency offset (Hz):</div>
                      <Field cls="w-[411px] h-[25px] mt-[2px] tracking-[0.3px]">0.0</Field>
                    </div>
                  </Section>
                  <div className="h-[7px] shrink-0" />
                  <Section title="Power sweep" up>
                    <div className="pl-[4px] pt-[6px] pb-[10px]">
                      <div className="h-[18px] leading-[18px]">Power sweep (dBm):</div>
                      <div className="flex items-center mt-[2px] h-[25px]">
                        <Field cls="w-[404px] h-[25px] tracking-[0.55px]">1.0; -9.0; -7.0; -5.0; -3.0; -1.0; 0.0; 2.0; 4.0; 6.0; 8.0; 10.0; 12</Field>
                        <span className="ml-[5px]"><Hammer /></span>
                      </div>
                    </div>
                  </Section>
                  <div className="h-[6px] shrink-0" />
                  <Section title="Impedance sweep" />
                  <div className="h-[7px] shrink-0" />
                  <Section title="Frequency bandwidth" up>
                    <div className="pl-[4px] pt-[13px] pb-[3px]">
                      <div className="h-[18px] leading-[18px]">Frequencies (Hz):</div>
                      <div className="flex items-center mt-[3px] h-[25px]">
                        <Field cls="w-[409px] h-[25px] tracking-[0.55px]">; 1.4112E7; 2.066E7; 2.722E7; 3.378E7; 4.033E7; 4.68E7; 5.34E</Field>
                        <span className="ml-[5px]"><Hammer /></span>
                      </div>
                    </div>
                  </Section>
                  <div className="h-[7px] shrink-0" />
                  <Section title="Output figure">
                    <div className="h-[278px] pl-[7px] pt-[10px]">
                      <div className="h-[18px] leading-[18px] font-bold">Main band configuration</div>
                      <div className="flex items-center mt-[9px] pl-[3px]">
                        <span className="w-[119px]">Frequency offset:</span>
                        <Field cls="w-[109px] h-[24px]">0.0</Field>
                      </div>
                      <div className="flex items-center mt-[8px] pl-[122px] gap-[4px]">
                        <Field cls="w-[109px] h-[24px]">100.0</Field>
                        %
                      </div>
                      <div className="h-[18px] leading-[18px] font-bold mt-[16px]">Adjacent band configuration</div>
                      <div className="flex items-center mt-[10px] pl-[3px]">
                        <span className="w-[119px]">Frequency offset:</span>
                        <Field cls="w-[109px] h-[24px]">0.0</Field>
                      </div>
                      <div className="h-[26px] mt-[52px] -ml-[6px] mr-[1px] bg-gradient-to-b from-[#d9e5f1] to-[#bdd0e3] pl-[6px] flex items-center font-bold">LO source</div>
                      <div className="h-[26px] mt-[11px] -ml-[6px] mr-[1px] bg-gradient-to-b from-[#d9e5f1] to-[#bdd0e3] flex items-center justify-end pr-[10px]"><Chev /></div>
                    </div>
                  </Section>
                </div>
                <div className="ml-[8px] w-[19px] flex flex-col bg-[#f0f0f0]">
                  <div className="h-[22px] flex items-center justify-center shrink-0">
                    <svg width="12" height="8" viewBox="0 0 12 8"><path d="M1 7 L6 1.5 L11 7" fill="none" stroke="#444" strokeWidth="1.6" /></svg>
                  </div>
                  <div className="h-[430px] bg-[#c8c8c8] shrink-0" />
                  <div className="mt-auto h-[22px] flex items-center justify-center shrink-0">
                    <svg width="12" height="8" viewBox="0 0 12 8"><path d="M1 1 L6 6.5 L11 1" fill="none" stroke="#444" strokeWidth="1.6" /></svg>
                  </div>
                </div>
              </div>
              <div className="flex mt-[8px] pl-[78px] gap-[10px]">
                <div className="w-[76px] h-[28px] border border-[#d0d0d0] bg-[#f0f0f0] flex items-center justify-center gap-[5px]">
                  <OpenI />Load
                </div>
                <div className="w-[94px] h-[28px] border border-[#d0d0d0] bg-[#f0f0f0] flex items-center justify-center gap-[5px]">
                  <Floppy />Save
                </div>
              </div>
            </div>
            {/* vertical splitter */}
            <div className="ml-[9px] -mt-[6px] mb-[2px] w-[8px] bg-[#c8c8c8] shrink-0 flex flex-col items-center pt-[10px] gap-[3px]">
              <Tri d="l" /><Tri d="r" />
            </div>
            {/* results pane */}
            <div className="ml-[8px] w-[1275px] shrink-0">
              <div className="w-[118px] h-[29px] -mb-px relative z-10 bg-white border border-b-0 border-[#d9d9d9] flex items-center pl-[8px] gap-[15px]">
                ACPR_test
                <svg width="16" height="16" viewBox="0 0 16 16" className="block">
                  <rect x="0.5" y="0.5" width="15" height="15" rx="2.5" fill="#e03020" stroke="#b0200f" />
                  <path d="M4.5 4.5 L11.5 11.5 M11.5 4.5 L4.5 11.5" stroke="#fff" strokeWidth="2.4" />
                </svg>
              </div>
              <div className="h-[875px] border border-[#d9d9d9] flex pl-[12px] pt-[9px]">
                {/* data group */}
                <div className="relative mt-[9px] w-[330px] h-[842px] border-2 border-[#e0e0e0] shrink-0">
                  <span className="absolute -top-[10px] left-[4px] bg-white px-[1px] leading-[18px]">Data</span>
                  <Rows />
                </div>
                {/* divider arrows */}
                <div className="ml-[9px] w-[13px] shrink-0 flex flex-col items-center pt-[1px] gap-[3px]">
                  <Tri d="l" /><Tri d="r" />
                </div>
                {/* charts */}
                <div className="w-[910px] shrink-0">
                  <div className="flex h-[430px]">
                    <div className="w-[454px]">
                      <Autoscale pl="pl-[24px]" />
                      <Chart vb={[1190, 234, 454, 386]} title="Acp left / Data rate (Hz)" tx={1421} ty={257}
                        l={1305} r={1638} t={271} b={509} ax={1300} bx={514}
                        yTicks={[["70", 273], ["60", 318], ["50", 362], ["40", 407], ["30", 451], ["20", 495]]}
                        xTicks={tickA} zero={1314} xs={x1s} y20={495} k={4.44} series={chart1}
                        yl={["Acp left", 1216, 392]} xl={["Data rate (Hz)", 1471, 600]} />
                    </div>
                    <div className="w-[12px] flex flex-col items-center pt-[6px] gap-[3px]">
                      <Tri d="l" /><Tri d="r" />
                    </div>
                    <div className="w-[444px]">
                      <Autoscale pl="pl-[18px]" />
                      <Chart vb={[1656, 234, 444, 386]} title="Acp right / Data rate (Hz)" tx={1874} ty={257}
                        l={1765} r={2086} t={271} b={509} ax={1760} bx={514}
                        yTicks={[["80", 274], ["70", 311], ["60", 348], ["50", 385], ["40", 422], ["30", 458], ["20", 495]]}
                        xTicks={tickB} zero={1774} xs={x2s} y20={495} k={3.68} series={chart2}
                        yl={["Acp right", 1676, 391]} xl={["Data rate (Hz)", 1924, 600]} />
                    </div>
                  </div>
                  <div className="h-[9px] flex items-center pl-[10px] gap-[5px]">
                    <Tri d="u" /><Tri d="d" />
                  </div>
                  <div className="flex">
                    <div className="w-[454px]">
                      <Autoscale pl="pl-[24px]" />
                      <Chart vb={[1190, 673, 454, 382]} title="Acp left / PIn (dBm)" tx={1420} ty={695}
                        l={1305} r={1638} t={709} b={937} ax={1300} bx={942}
                        yTicks={[["70", 711], ["60", 754], ["50", 797], ["40", 839], ["30", 881], ["20", 925]]}
                        xTicks={[["-10", 1356], ["-5", 1411], ["0", 1464], ["5", 1519], ["10", 1573], ["15", 1627]]}
                        zero={1464} xs={x3s} y20={925} k={4.27} series={chart3}
                        yl={["Acp left", 1216, 825]} xl={["PIn (dBm)", 1471, 1028]} />
                    </div>
                    <div className="w-[12px] flex flex-col items-center pt-[4px] gap-[3px]">
                      <Tri d="l" /><Tri d="r" />
                    </div>
                    <div className="w-[444px]">
                      <Autoscale pl="pl-[18px]" />
                      <Chart vb={[1656, 673, 444, 382]} title="Acp right / PIn (dBm)" tx={1873} ty={695}
                        l={1765} r={2086} t={709} b={937} ax={1760} bx={942}
                        yTicks={[["80", 713], ["70", 747], ["60", 783], ["50", 819], ["40", 853], ["30", 889], ["20", 925]]}
                        xTicks={[["-10", 1814], ["-5", 1867], ["0", 1919], ["5", 1971], ["10", 2024], ["15", 2076]]}
                        zero={1919} xs={x4s} y20={925} k={3.53} series={chart4}
                        yl={["Acp right", 1676, 825]} xl={["PIn (dBm)", 1924, 1028]} />
                    </div>
                  </div>
                </div>
              </div>
            </div>
          </div>
        </div>
        {/* status */}
        <div className="flex-1 flex items-center justify-between pl-[9px] pr-[10px]">
          <div className="w-[532px] h-[26px] border border-[#c8c8c8] bg-white text-[14px] text-[#222] flex items-center pl-[2px] overflow-hidden whitespace-nowrap">
            D:\Users\saabe\Documents\VISION\measurement\setup\Test003_validation_setup.set
          </div>
          <div className="w-[32px] h-[25px] border-2 border-[#c4c4c4] text-[14px] text-[#2fa52f] flex items-center justify-center">Idle</div>
        </div>
      </div>

      {/* white veil under the bench drawing */}
      <div className="absolute left-0 top-[668px] w-[848px] h-[458px] bg-white/85" />
      <Bench />
    </div>
  );
}
